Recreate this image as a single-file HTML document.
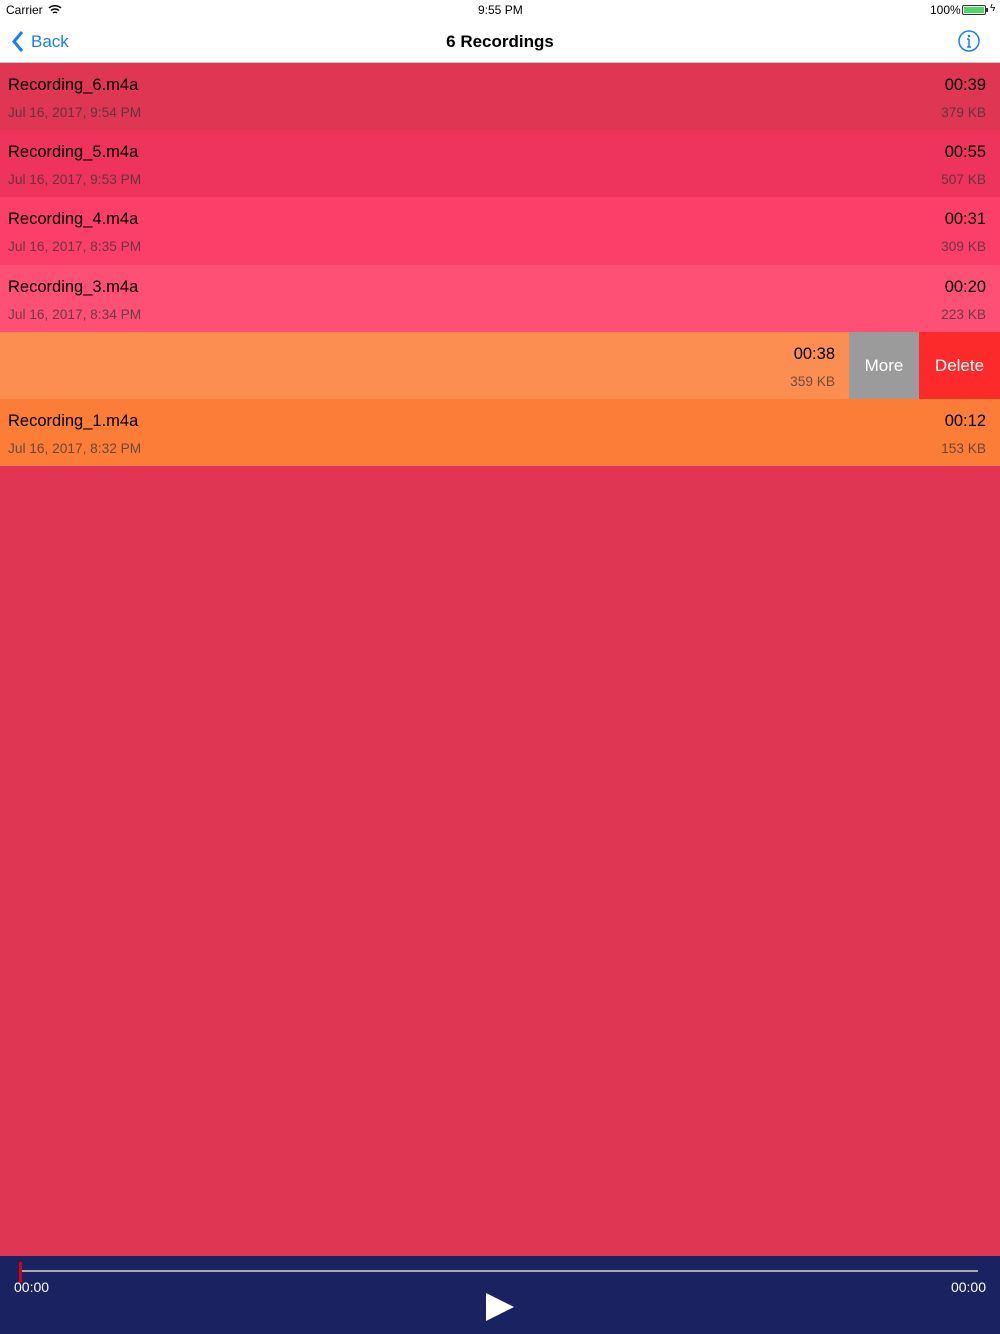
<!DOCTYPE html>
<html><head><meta charset="utf-8"><style>
*{margin:0;padding:0;box-sizing:border-box}
body{width:1000px;height:1334px;background:#DF3654;font-family:"Liberation Sans",sans-serif;position:relative;overflow:hidden}
.status{position:absolute;top:0;left:0;width:1000px;height:20px;background:#fff;font-size:12px;color:#000}
.nav{position:absolute;top:20px;left:0;width:1000px;height:43px;background:#fff;border-bottom:1px solid #c8c8c8}
.row{position:absolute;left:0;width:1000px;height:67px}
.t{position:absolute;left:8px;top:13px;font-size:16.5px;color:#000}
.d{position:absolute;left:8px;top:42px;font-size:13.7px;color:rgba(50,50,50,0.7)}
.r{position:absolute;right:14px;top:13px;font-size:16.5px;color:#000}
.s{position:absolute;right:14px;top:42px;font-size:13.7px;color:rgba(50,50,50,0.7)}
</style></head><body>
<div class="status">
<span style="position:absolute;left:6px;top:3px">Carrier</span>
<svg style="position:absolute;left:48px;top:4px" width="14" height="11" viewBox="0 0 14 11"><path d="M1 4a9 9 0 0 1 12 0M3 6.5a6 6 0 0 1 8 0M5 9a3 3 0 0 1 4 0" stroke="#000" stroke-width="1.5" fill="none"/></svg>
<span style="position:absolute;left:478px;top:3px">9:55 PM</span>
<span style="position:absolute;left:930px;top:3px">100%</span>
<div style="position:absolute;left:962px;top:5px;width:24px;height:10px;border:1px solid #333;border-radius:2px;padding:1px"><div style="width:100%;height:100%;background:#4cd964"></div></div>
<div style="position:absolute;left:986px;top:8px;width:2px;height:4px;background:#333"></div>
<span style="position:absolute;left:990px;top:3px;font-size:10px">ϟ</span>
</div>
<div class="nav">
<svg style="position:absolute;left:12px;top:11px" width="12" height="21" viewBox="0 0 12 21"><path d="M10 1L2 10.5L10 20" stroke="#157efb" stroke-width="3" fill="none"/></svg>
<span style="position:absolute;left:31px;top:12px;font-size:17px;color:#157efb">Back</span>
<span style="position:absolute;left:0;width:1000px;text-align:center;top:12px;font-size:17px;font-weight:bold;color:#000">6 Recordings</span>
<svg style="position:absolute;left:958px;top:10px" width="22" height="22" viewBox="0 0 22 22"><circle cx="11" cy="11" r="10" stroke="#157efb" stroke-width="1.5" fill="none"/><circle cx="11" cy="6" r="1.3" fill="#157efb"/><path d="M11 9v8M9 9h2M9 17h4" stroke="#157efb" stroke-width="1.5"/></svg>
</div>
<div class="row" style="top:63px;background:#DF3654"><span class="t">Recording_6.m4a</span><span class="d">Jul 16, 2017, 9:54 PM</span><span class="r">00:39</span><span class="s">379 KB</span></div>
<div class="row" style="top:130px;background:#EE335C"><span class="t">Recording_5.m4a</span><span class="d">Jul 16, 2017, 9:53 PM</span><span class="r">00:55</span><span class="s">507 KB</span></div>
<div class="row" style="top:197px;height:68px;background:#FC3F68"><span class="t">Recording_4.m4a</span><span class="d">Jul 16, 2017, 8:35 PM</span><span class="r">00:31</span><span class="s">309 KB</span></div>
<div class="row" style="top:265px;background:#FD5074"><span class="t">Recording_3.m4a</span><span class="d">Jul 16, 2017, 8:34 PM</span><span class="r">00:20</span><span class="s">223 KB</span></div>
<div class="row" style="top:332px;background:#FC8E51"><span class="r" style="right:165px">00:38</span><span class="s" style="right:165px">359 KB</span>
<div style="position:absolute;left:849px;top:0;width:70px;height:67px;background:#9B9B9B;color:#fff;font-size:17px;text-align:center;line-height:67px">More</div>
<div style="position:absolute;left:919px;top:0;width:81px;height:67px;background:#FC2A2A;color:#fff;font-size:17px;text-align:center;line-height:67px">Delete</div></div>
<div class="row" style="top:399px;background:#FB7D37"><span class="t">Recording_1.m4a</span><span class="d">Jul 16, 2017, 8:32 PM</span><span class="r">00:12</span><span class="s">153 KB</span></div>
<div style="position:absolute;top:1256px;left:0;width:1000px;height:78px;background:#1B2262">
<div style="position:absolute;left:20px;top:14px;width:958px;height:2px;background:#aaa"></div>
<div style="position:absolute;left:19px;top:6px;width:3px;height:20px;background:#d0021b"></div>
<span style="position:absolute;left:14px;top:23px;color:#fff;font-size:14px">00:00</span>
<span style="position:absolute;right:14px;top:23px;color:#fff;font-size:14px">00:00</span>
<svg style="position:absolute;left:485px;top:36px" width="30" height="30" viewBox="0 0 30 30"><path d="M1 1L29 15L1 29Z" fill="#fff"/></svg>
</div>
</body></html>
